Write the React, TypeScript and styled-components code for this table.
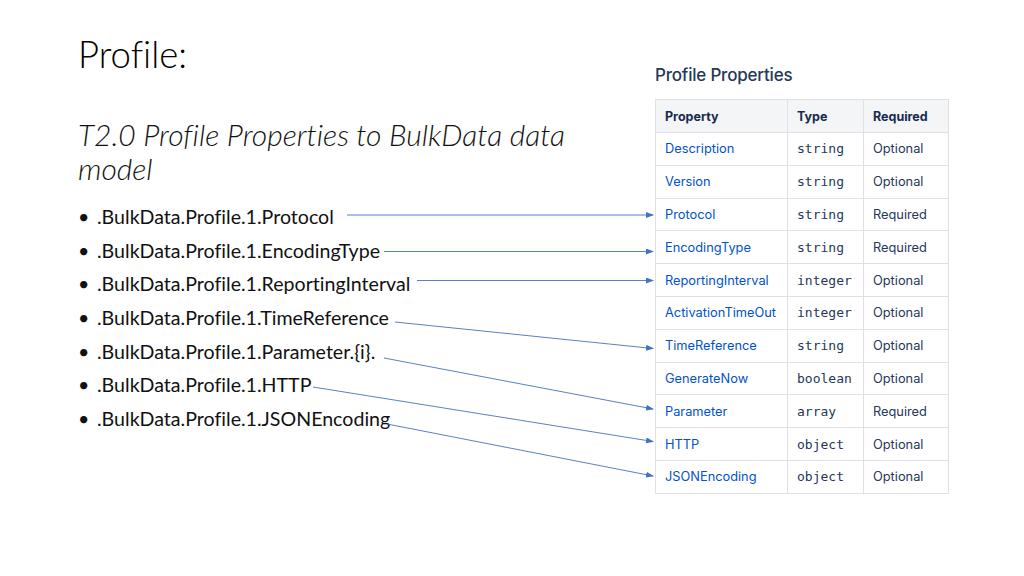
import React from "react";
import styled, { createGlobalStyle } from "styled-components";

const Global = createGlobalStyle`
  html, body { margin: 0; padding: 0; background: #ffffff; }
  #root { width: 1024px; height: 576px; }
`;

const Slide = styled.div`
  position: relative;
  width: 1024px;
  height: 576px;
  background: #ffffff;
  display: flex;
  overflow: hidden;
`;

const Left = styled.div`
  width: 577px;
  padding: 31px 0 0 78px;
  box-sizing: border-box;
  font-family: Lato, "Open Sans", sans-serif;
  font-variant-ligatures: none;
  color: #000;
`;

const Title = styled.h1`
  margin: 0;
  font-weight: 300;
  font-size: 36.5px;
  line-height: 46px;
`;

const Subtitle = styled.h2`
  margin: 40px 0 0 0;
  font-weight: 300;
  font-style: italic;
  font-size: 30px;
  line-height: 34px;
  color: #111;
`;

const Bullets = styled.ul`
  list-style: none;
  margin: 15px 0 0 0;
  padding: 0;
`;

const Bullet = styled.li`
  display: flex;
  align-items: baseline;
  height: 33.7px;
  font-size: 19.6px;
  font-weight: 400;
  line-height: 33.7px;
  color: #111;
  &::before {
    content: "•";
    width: 19px;
    flex: none;
  }
`;

const Right = styled.div`
  padding: 64px 0 0 78px;
  font-family: Inter, Roboto, sans-serif;
`;

const TableTitle = styled.div`
  font-size: 17px;
  line-height: 22px;
  color: #253858;
  font-weight: 500;
  letter-spacing: -0.2px;
  margin-bottom: 13px;
`;

const Table = styled.table`
  border-collapse: collapse;
  color: #172b4d;
`;

const Th = styled.th<{ $w: number }>`
  width: ${(p) => p.$w}px;
  height: 33px;
  padding: 0 0 0 9px;
  box-sizing: border-box;
  text-align: left;
  background: #f4f5f7;
  border: 1px solid #dfe1e6;
  font-weight: 700;
  font-size: 12.5px;
  color: #172b4d;
`;

const Td = styled.td<{ $kind?: "link" | "mono" | "plain" }>`
  height: 32.8px;
  padding: 0 0 0 9px;
  box-sizing: border-box;
  border: 1px solid #dfe1e6;
  white-space: nowrap;
  color: ${(p) => (p.$kind === "link" ? "#0052cc" : "#253858")};
  font-family: ${(p) =>
    p.$kind === "mono" ? '"DejaVu Sans Mono", monospace' : "Inter, Roboto, sans-serif"};
  font-size: ${(p) => (p.$kind === "mono" ? "13px" : "12.8px")};
`;

const Overlay = styled.svg`
  position: absolute;
  left: 0;
  top: 0;
  pointer-events: none;
`;

const bullets = [
  ".BulkData.Profile.1.Protocol",
  ".BulkData.Profile.1.EncodingType",
  ".BulkData.Profile.1.ReportingInterval",
  ".BulkData.Profile.1.TimeReference",
  ".BulkData.Profile.1.Parameter.{i}.",
  ".BulkData.Profile.1.HTTP",
  ".BulkData.Profile.1.JSONEncoding",
];

const rows: [string, string, string][] = [
  ["Description", "string", "Optional"],
  ["Version", "string", "Optional"],
  ["Protocol", "string", "Required"],
  ["EncodingType", "string", "Required"],
  ["ReportingInterval", "integer", "Optional"],
  ["ActivationTimeOut", "integer", "Optional"],
  ["TimeReference", "string", "Optional"],
  ["GenerateNow", "boolean", "Optional"],
  ["Parameter", "array", "Required"],
  ["HTTP", "object", "Optional"],
  ["JSONEncoding", "object", "Optional"],
];

const arrows: [number, number, number, number][] = [
  [347, 215, 653, 215],
  [384, 251.5, 653, 251.5],
  [417, 280.5, 653, 280.5],
  [395, 322, 653, 348.5],
  [384, 358, 653, 409],
  [313, 387, 653, 441.5],
  [387, 424, 653, 476],
];

export default function App() {
  return (
    <>
      <Global />
      <Slide>
        <Left>
          <Title>Profile:</Title>
          <Subtitle>
            T2.0 Profile Properties to BulkData data
            <br />
            model
          </Subtitle>
          <Bullets>
            {bullets.map((b) => (
              <Bullet key={b}>{b}</Bullet>
            ))}
          </Bullets>
        </Left>
        <Right>
          <TableTitle>Profile Properties</TableTitle>
          <Table>
            <thead>
              <tr>
                <Th $w={132}>Property</Th>
                <Th $w={76}>Type</Th>
                <Th $w={85}>Required</Th>
              </tr>
            </thead>
            <tbody>
              {rows.map(([n, t, r]) => (
                <tr key={n}>
                  <Td $kind="link">{n}</Td>
                  <Td $kind="mono">{t}</Td>
                  <Td $kind="plain">{r}</Td>
                </tr>
              ))}
            </tbody>
          </Table>
        </Right>
        <Overlay width={1024} height={576} viewBox="0 0 1024 576">
          <defs>
            <marker
              id="ah"
              markerWidth="8"
              markerHeight="6"
              refX="7"
              refY="3"
              orient="auto"
              markerUnits="userSpaceOnUse"
            >
              <path d="M0,0 L8,3 L0,6 Z" fill="#4472c4" />
            </marker>
          </defs>
          {arrows.map(([x1, y1, x2, y2], i) => (
            <line
              key={i}
              x1={x1}
              y1={y1}
              x2={x2}
              y2={y2}
              stroke="#4472c4"
              strokeWidth={0.9}
              markerEnd="url(#ah)"
            />
          ))}
        </Overlay>
      </Slide>
    </>
  );
}
